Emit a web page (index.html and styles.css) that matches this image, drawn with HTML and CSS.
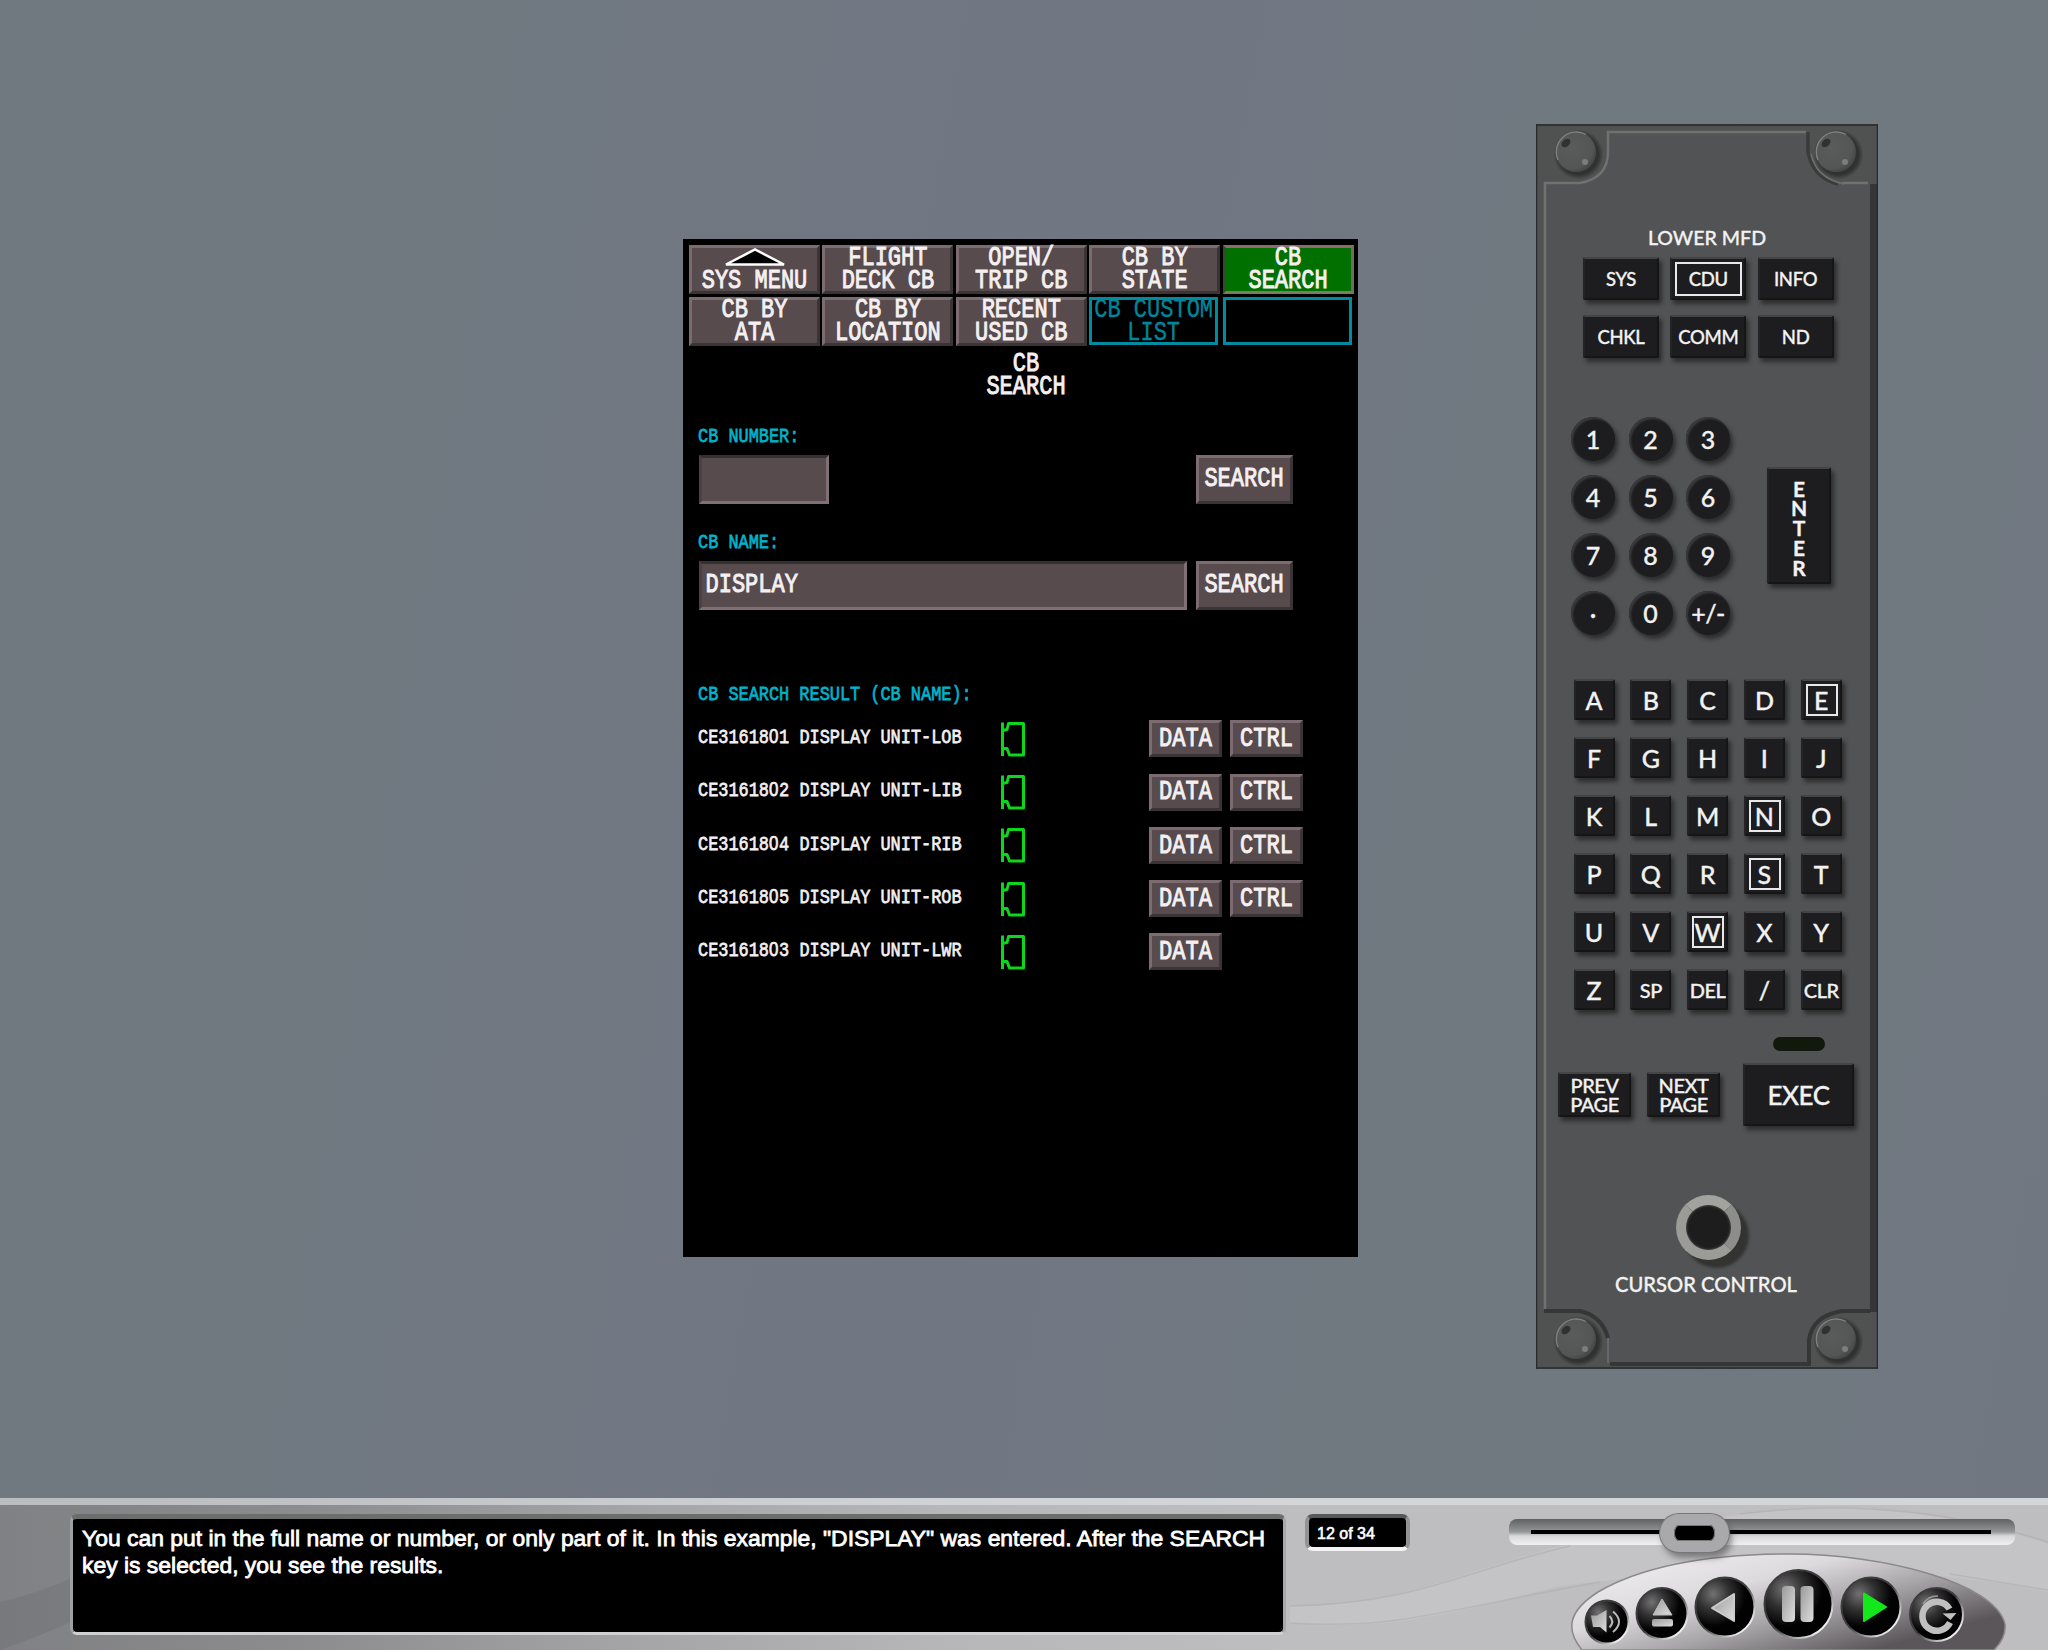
FILE: index.html
```html
<!DOCTYPE html>
<html lang="en">
<head>
<meta charset="utf-8">
<title>CB Search</title>
<link rel="stylesheet" href="styles.css">
</head>
<body>

<svg width="0" height="0" class="defs">
    <defs>
        <symbol id="breaker" viewBox="0 0 26 36">
            <path d="M2.500 1.500V35M2.500 9.500L7 8.500L8.500 2.500H23.500V34H9.500L7 27.500H2.500" fill="none" stroke="#0bd81b" stroke-width="3" stroke-linejoin="round"/>
        </symbol>
        <radialGradient id="screwFace" cx="0.4" cy="0.4" r="0.6">
            <stop offset="0" stop-color="#5a5b5b"/>
            <stop offset="0.85" stop-color="#545555"/>
            <stop offset="1" stop-color="#484949"/>
        </radialGradient>
        <radialGradient id="screwShade" cx="0.5" cy="0.5" r="0.5">
            <stop offset="0.8" stop-color="#303131"/>
            <stop offset="1" stop-color="#303131" stop-opacity="0"/>
        </radialGradient>
        <symbol id="screw" viewBox="0 0 54 54" overflow="visible">
            <circle cx="28.5" cy="28.5" r="25" fill="url(#screwShade)"/>
            <circle cx="26" cy="26" r="20" fill="url(#screwFace)"/>
            <path d="M8 34A20 20 0 0 1 36 8.500" fill="none" stroke="#808181" stroke-width="1.4"/>
            <ellipse cx="16" cy="17" rx="5" ry="3.500" fill="#303131" transform="rotate(-40 16 17)"/>
            <circle cx="35" cy="36" r="3" fill="#7c7d7d"/>
        </symbol>
    </defs>
</svg>

<div id="stage">

    <div id="mfd">
        <div class="tabs">
            <div class="tab">
                <svg class="up" width="66" height="20" viewBox="0 0 66 20"><path d="M4 17.500L33 2.500L62 17.500Z" fill="#000" stroke="#fff" stroke-width="2.500"/></svg>
                <span class="txt"><br>SYS MENU</span>
            </div>
            <div class="tab"><span class="txt">FLIGHT<br>DECK CB</span></div>
            <div class="tab"><span class="txt">OPEN/<br>TRIP CB</span></div>
            <div class="tab"><span class="txt">CB BY<br>STATE</span></div>
            <div class="tab active"><span class="txt">CB<br>SEARCH</span></div>
            <div class="tab"><span class="txt">CB BY<br>ATA</span></div>
            <div class="tab"><span class="txt">CB BY<br>LOCATION</span></div>
            <div class="tab"><span class="txt">RECENT<br>USED CB</span></div>
            <div class="tab off"><span class="txt">CB CUSTOM<br>LIST</span></div>
            <div class="tab off"></div>
        </div>
        <div class="title"><span class="txt">CB<br>SEARCH</span></div>

        <div class="label"><span class="small">CB NUMBER:</span></div>
        <div class="search">
            <div class="field short"></div>
            <div class="btn"><span class="txt">SEARCH</span></div>
        </div>
        <div class="label name"><span class="small">CB NAME:</span></div>
        <div class="search">
            <div class="field"><span class="txt">DISPLAY</span></div>
            <div class="btn"><span class="txt">SEARCH</span></div>
        </div>

        <div class="label result"><span class="small">CB SEARCH RESULT (CB NAME):</span></div>
        <div class="rows">
            <div class="row">
                <span class="small">CE31618<i>0</i>1 DISPLAY UNIT-LOB</span>
                <svg class="cb" width="26" height="36"><use href="#breaker"/></svg>
                <div class="btn"><span class="txt">DATA</span></div>
                <div class="btn"><span class="txt">CTRL</span></div>
            </div>
            <div class="row">
                <span class="small">CE31618<i>0</i>2 DISPLAY UNIT-LIB</span>
                <svg class="cb" width="26" height="36"><use href="#breaker"/></svg>
                <div class="btn"><span class="txt">DATA</span></div>
                <div class="btn"><span class="txt">CTRL</span></div>
            </div>
            <div class="row">
                <span class="small">CE31618<i>0</i>4 DISPLAY UNIT-RIB</span>
                <svg class="cb" width="26" height="36"><use href="#breaker"/></svg>
                <div class="btn"><span class="txt">DATA</span></div>
                <div class="btn"><span class="txt">CTRL</span></div>
            </div>
            <div class="row">
                <span class="small">CE31618<i>0</i>5 DISPLAY UNIT-ROB</span>
                <svg class="cb" width="26" height="36"><use href="#breaker"/></svg>
                <div class="btn"><span class="txt">DATA</span></div>
                <div class="btn"><span class="txt">CTRL</span></div>
            </div>
            <div class="row">
                <span class="small">CE31618<i>0</i>3 DISPLAY UNIT-LWR</span>
                <svg class="cb" width="26" height="36"><use href="#breaker"/></svg>
                <div class="btn"><span class="txt">DATA</span></div>
            </div>
        </div>
    </div>

    <div id="cdu">
        <svg class="plate" width="342" height="1245" viewBox="0 0 342 1245">
            <rect width="342" height="1245" fill="#505151"/>
            <rect x="334" y="60" width="8" height="1128" fill="#353736"/>
            <path d="M7 1188V59H46Q72 52 72 30V7H272V30Q278 54 306 59H334V1186H302Q274 1194 272 1216V1239H72V1214Q66 1190 42 1186H7Z" fill="#525354"/>
            <path d="M9 1186V59H44Q72 54 72 28V8H270" fill="none" stroke="#707171" stroke-width="2.500"/>
            <path d="M306 59H332" fill="none" stroke="#707171" stroke-width="2.500"/>
            <path d="M272 8V28Q277 54 302 60" fill="none" stroke="#3a3b3b" stroke-width="3.500"/>
            <path d="M334 1187H306Q276 1192 273 1216V1240H74" fill="none" stroke="#353636" stroke-width="4"/>
            <path d="M8 1187H44Q66 1192 72 1214" fill="none" stroke="#353636" stroke-width="4"/>
            <path d="M72 1214V1239" fill="none" stroke="#666767" stroke-width="2"/>
            <path d="M308 60Q280 54 275 30" fill="none" stroke="#6d6e6e" stroke-width="1.500"/>
            <use href="#screw" x="14" y="2" width="54" height="54"/>
            <use href="#screw" x="274" y="2" width="54" height="54"/>
            <use href="#screw" x="14" y="1189" width="54" height="54"/>
            <use href="#screw" x="274" y="1189" width="54" height="54"/>
            <path d="M0.500 0V1245M0 1H342M0 1244H342M341.500 0V1245" stroke="#262b2e" stroke-width="1.500"/>
        </svg>

        <div class="heading">LOWER MFD</div>
        <div class="modes">
            <div class="key">SYS</div><div class="key lit">CDU</div><div class="key">INFO</div>
            <div class="key">CHKL</div><div class="key">COMM</div><div class="key">ND</div>
        </div>

        <div class="numeric">
            <div class="digits">
                <div class="dot">1</div><div class="dot">2</div><div class="dot">3</div>
                <div class="dot">4</div><div class="dot">5</div><div class="dot">6</div>
                <div class="dot">7</div><div class="dot">8</div><div class="dot">9</div>
                <div class="dot">·</div><div class="dot">0</div><div class="dot thin">+/-</div>
            </div>
            <div class="key enter">E<br>N<br>T<br>E<br>R</div>
        </div>

        <div class="alpha">
            <div class="key">A</div><div class="key">B</div><div class="key">C</div><div class="key">D</div><div class="key lit">E</div>
            <div class="key">F</div><div class="key">G</div><div class="key">H</div><div class="key">I</div><div class="key">J</div>
            <div class="key">K</div><div class="key">L</div><div class="key">M</div><div class="key lit">N</div><div class="key">O</div>
            <div class="key">P</div><div class="key">Q</div><div class="key">R</div><div class="key lit">S</div><div class="key">T</div>
            <div class="key">U</div><div class="key">V</div><div class="key lit">W</div><div class="key">X</div><div class="key">Y</div>
            <div class="key">Z</div><div class="key word">SP</div><div class="key word">DEL</div><div class="key">/</div><div class="key word">CLR</div>
        </div>

        <div class="led"></div>
        <div class="pages">
            <div class="key page">PREV<br>PAGE</div>
            <div class="key page">NEXT<br>PAGE</div>
            <div class="key exec">EXEC</div>
        </div>
        <div class="knob"></div>
        <div class="heading cursor">CURSOR CONTROL</div>
    </div>
</div>

<div id="player">
    <svg class="waves" width="2048" height="152" viewBox="0 0 2048 152">
        <path d="M0 104Q40 95 76 78V122Q40 138 0 152Z" fill="#000" opacity="0.06"/>
        <path d="M1290 108C1460 108 1500 28 1820 10C1930 10 2000 30 2048 46V94C1960 75 1800 60 1560 88C1460 112 1400 134 1290 125Z" fill="#e2dde2" opacity="0.18"/>
        <path d="M1290 108C1420 106 1470 70 1570 48M1740 16Q1900 -4 2048 44M1290 125C1400 132 1440 112 1600 84M1950 76L2048 92" fill="none" stroke="#a9a8ab" stroke-width="1.500" opacity="0.45"/>
    </svg>
    <div class="caption">You can put in the full name or number, or only part of it. In this example, "DISPLAY" was entered. After the SEARCH<br>key is selected, you see the results.</div>
    <div class="counter">12 of 34</div>
    <div class="controls">
        <div class="slider"><div class="line"></div><div class="thumb"></div></div>
        <svg class="pod" width="440" height="97" viewBox="1568 1553 440 97">
            <defs>
                <linearGradient id="podFill" x1="0.1" y1="0.1" x2="0.9" y2="0.75">
                    <stop offset="0" stop-color="#eeecef"/>
                    <stop offset="0.35" stop-color="#dcdadd"/>
                    <stop offset="0.65" stop-color="#a5a2a6"/>
                    <stop offset="1" stop-color="#5a565a"/>
                </linearGradient>
                <radialGradient id="ball" cx="0.3" cy="0.28" r="0.55">
                    <stop offset="0" stop-color="#727272"/>
                    <stop offset="0.5" stop-color="#303030"/>
                    <stop offset="1" stop-color="#020202"/>
                </radialGradient>
                <linearGradient id="chrome" x1="0" y1="0" x2="1" y2="1">
                    <stop offset="0" stop-color="#9a9a9a"/>
                    <stop offset="1" stop-color="#dedede"/>
                </linearGradient>
                <linearGradient id="rim" x1="0" y1="0" x2="1" y2="1">
                    <stop offset="0.5" stop-color="#3c3c3c"/>
                    <stop offset="0.85" stop-color="#eee"/>
                </linearGradient>
            </defs>
            <path d="M1582 1650C1564 1628 1570 1610 1598 1592C1650 1562 1720 1554 1790 1554C1880 1554 1995 1582 2005 1624C2006 1634 2001 1643 1994 1650Z" fill="url(#podFill)" stroke="#8b888c" stroke-width="1.500"/>
            <g fill="url(#ball)" stroke="url(#rim)" stroke-width="2">
                <circle cx="1607" cy="1622" r="21.500"/>
                <circle cx="1662" cy="1613.500" r="25.500"/>
                <circle cx="1725" cy="1607" r="29.500"/>
                <circle cx="1798.500" cy="1604" r="34"/>
                <circle cx="1871" cy="1607" r="29.500"/>
                <circle cx="1936.500" cy="1614.500" r="26.500"/>
            </g>
            <path d="M1591 1615.500H1597L1606.500 1610V1632.500L1600 1627H1593Z" fill="url(#chrome)"/>
            <path d="M1609.500 1616Q1615 1621.500 1609.500 1627.500M1613 1611.500Q1625 1621.500 1613 1632" fill="none" stroke="#bbb" stroke-width="2"/>
            <path d="M1662 1599L1672 1615H1653Z" fill="url(#chrome)" stroke="#bbb" stroke-linejoin="round"/>
            <rect x="1652" y="1619" width="21" height="7.500" rx="2" fill="url(#chrome)"/>
            <path d="M1712 1608L1734 1594V1621Z" fill="url(#chrome)" stroke="#ccc" stroke-width="2" stroke-linejoin="round"/>
            <rect x="1782" y="1586" width="13" height="36" rx="4" fill="url(#chrome)"/>
            <rect x="1800.500" y="1586" width="13" height="36" rx="4" fill="url(#chrome)"/>
            <path d="M1864 1593.500L1886 1607L1864 1621Z" fill="#12e81c" stroke="#12e81c" stroke-width="2" stroke-linejoin="round"/>
            <path d="M1923 1604A17 17 0 0 1 1938 1596" fill="none" stroke="#999" stroke-width="1.500"/>
            <path d="M1950 1622.500A14.500 14.500 0 1 1 1949.500 1609" fill="none" stroke="#c0c0c0" stroke-width="6.500"/>
            <path d="M1942.500 1613.500L1956.500 1613L1950.500 1620Z" fill="#c0c0c0"/>
        </svg>
    </div>
</div>

</body>
</html>
```
FILE: styles.css
```css
* {
    box-sizing: border-box;
}
body {
    margin: 0;
    width: 2048px;
    height: 1650px;
    overflow: hidden;
    background: #707882;
    font-family: "Liberation Sans", Arial, sans-serif;
}
.defs {
    position: absolute;
}
#stage {
    display: flex;
    align-items: flex-start;
    height: 1498px;
    padding-left: 683px;
    background: linear-gradient(100deg, #70797f 0%, #707783 50%, #70797f 80%, #707781 100%);
}

/* display unit */
#mfd {
    width: 675px;
    height: 1018px;
    margin-top: 239px;
    padding: 6px 4px 0 6px;
    background: #000;
    color: #f4f0f2;
    font-family: "Liberation Mono", monospace;
}
.txt,
.small {
    display: block;
    white-space: pre;
    font-size: 22px;
    line-height: 17.5px;
    transform: scaleY(1.29);
    -webkit-text-stroke: 0.8px;
}
.small {
    font-size: 16.9px;
    transform: scaleY(1.25);
    -webkit-text-stroke: 0.6px;
}
.small i {
    font-family: "Liberation Sans", Arial, sans-serif;
    font-style: normal;
    letter-spacing: 0.75px;
}
.tabs {
    display: grid;
    grid-template-columns: repeat(5, 131px);
    grid-auto-rows: 49px;
    gap: 3px 2.4px;
    text-align: center;
}
.tab,
.btn {
    display: flex;
    align-items: center;
    justify-content: center;
    background: #584b4e;
    border: 3px solid;
    border-color: #7c6c71 #3b3436 #3b3436 #7c6c71;
}
.tab {
    position: relative;
}
.tab .up {
    position: absolute;
    left: 30px;
    top: -1px;
}
.tab.active {
    background: #007000;
    border-color: #8d6a6c #716c5c #7c7c62 #344a30;
}
.tab.off {
    width: 129px;
    height: 48px;
    background: #000;
    color: #00869b;
    border: 3px solid #008ba0;
}
.tab.off .txt {
    -webkit-text-stroke: 0.3px;
}
.title {
    padding-top: 12px;
    margin-right: 1px;
    text-align: center;
}
.title .txt {
    line-height: 17.8px;
    padding-left: 10px;
}
.label {
    margin: 34px 0 0 9px;
    height: 18px;
    color: #00b4cc;
}
.label.name {
    margin-top: 30px;
}
.label.result {
    margin-top: 76px;
}
.search {
    display: flex;
    width: 594px;
    margin: 9px 0 0 9.5px;
    justify-content: space-between;
}
.field {
    display: flex;
    align-items: center;
    width: 488px;
    height: 49px;
    padding-left: 4px;
    background: #584b4e;
    border: 3px solid;
    border-color: #352f31 #806f74 #806f74 #4b4043;
}
.field.short {
    width: 130px;
}
.search .btn {
    width: 97px;
    height: 49px;
}
.rows {
    margin: 17px 0 0 9px;
}
.row {
    display: flex;
    align-items: center;
    height: 36.4px;
    margin-bottom: 16.9px;
}
.row .small {
    width: 302px;
    margin-top: -3px;
}
.row .cb {
    margin-right: 123px;
}
.row .btn {
    width: 73px;
    height: 37px;
    margin-right: 8px;
}

/* keyboard unit */
#cdu {
    position: relative;
    width: 342px;
    height: 1245px;
    margin: 124px 0 0 178px;
    padding-top: 102px;
    color: #f2f2f2;
    font-family: Lato, sans-serif;
    font-weight: 500;
}
.plate {
    position: absolute;
    left: 0;
    top: 0;
}
#cdu > div {
    position: relative;
}
.heading {
    height: 24px;
    line-height: 24px;
    font-size: 19.6px;
    text-align: center;
    -webkit-text-stroke: 0.3px;
}
.key {
    display: flex;
    align-items: center;
    justify-content: center;
    background: #1d1d1f;
    border: 2px solid;
    border-color: #454547 #151516 #151516 #242426;
    border-radius: 2px;
    box-shadow: 3px 4px 4px rgba(20, 20, 20, 0.6);
    font-size: 23px;
    -webkit-text-stroke: 0.3px;
}
.lit {
    position: relative;
}
.lit::after {
    content: "";
    position: absolute;
    left: 3px;
    top: 3px;
    right: 2px;
    bottom: 2px;
    border: 2px solid #e8e8e8;
}
.modes {
    display: grid;
    grid-template-columns: repeat(3, 76px);
    gap: 15px 11.3px;
    padding: 7px 0 0 47px;
}
.modes .key {
    height: 43px;
    padding-top: 1px;
    font-size: 18.5px;
    letter-spacing: -0.3px;
}
.numeric {
    display: flex;
    padding: 59px 0 0 35px;
}
.digits {
    display: grid;
    grid-template-columns: repeat(3, 44px);
    gap: 14px 13.5px;
}
.dot {
    display: flex;
    align-items: center;
    justify-content: center;
    height: 44px;
    border-radius: 50%;
    background: #1d1d1f;
    box-shadow: inset 2px 2px 2px #3b3b3d, 3px 4px 4px rgba(20, 20, 20, 0.6);
    font-size: 25px;
    -webkit-text-stroke: 0.3px;
}
.dot.thin {
    letter-spacing: -0.5px;
}
.enter {
    width: 64px;
    height: 117px;
    margin: 50px 0 0 37px;
    padding-top: 5px;
    font-size: 21px;
    font-weight: bold;
    line-height: 19.7px;
    text-align: center;
}
.alpha {
    display: grid;
    grid-template-columns: repeat(5, 41px);
    gap: 17px 15.8px;
    padding: 44px 0 0 37.5px;
}
.alpha .key {
    height: 41px;
    font-size: 25px;
}
.alpha .word {
    font-size: 20px;
    letter-spacing: -0.5px;
}
.led {
    width: 52px;
    height: 14px;
    margin: 27px 0 0 237px;
    border-radius: 7px;
    background: #10190c;
}
.pages {
    display: flex;
    align-items: center;
    height: 63px;
    margin: 12px 0 0 22px;
}
.page {
    width: 73px;
    height: 45px;
    margin-right: 16px;
    font-size: 20px;
    line-height: 19px;
    text-align: center;
    letter-spacing: -0.5px;
}
.exec {
    width: 111px;
    height: 63px;
    margin-left: 7px;
    font-size: 26px;
    letter-spacing: -0.5px;
}
.knob {
    width: 65px;
    height: 65px;
    margin: 69px 0 0 140px;
    border: 10px solid #9b9c98;
    border-top-color: #a2a29e;
    border-right-color: #8d8e8b;
    border-radius: 50%;
    background: #1d1d1d;
    box-shadow: 8px 8px 3px #333432, inset 0 0 3px #666;
}
.heading.cursor {
    margin: 12px 0 0 -2px;
    font-size: 20.2px;
}

/* bottom bar */
#player {
    position: relative;
    display: flex;
    align-items: flex-start;
    height: 152px;
    padding: 16px 0 0 70px;
    border-top: 7px solid rgba(225, 230, 232, 0.6);
    background: linear-gradient(90deg, #808184 0, #8c8b8e 300px, #a4a3a5 620px, #b7b6b9 950px, #bebdc0 1300px, #bebdc0 100%) border-box;
    color: #fff;
}
#player > div {
    position: relative;
}
.waves {
    position: absolute;
    left: 0;
    top: -7px;
}
.caption {
    width: 1216px;
    height: 121px;
    margin-top: -7px;
    padding: 6px 0 0 9px;
    background: #000;
    border: 3px solid;
    border-color: #6c6e6e #a8a8aa #d0d0d2 #a0a0a2;
    border-top-width: 5px;
    border-radius: 7px;
    font-size: 22.9px;
    line-height: 26.5px;
    white-space: nowrap;
    -webkit-text-stroke: 0.8px;
}
.counter {
    width: 105px;
    height: 37px;
    margin: -7px 0 0 19px;
    padding: 6px 0 0 8px;
    background: #000;
    border: 4px solid;
    border-color: #57585a #929294 #f4f4f4 #929294;
    border-radius: 8px;
    font-size: 16px;
    line-height: 19px;
    -webkit-text-stroke: 0.6px;
}
.controls {
    width: 506px;
    margin-left: 99px;
}
.slider {
    position: relative;
    height: 26px;
    margin-top: -2px;
    padding: 11px 24px 0 22px;
    border-radius: 8px;
    background: linear-gradient(#606163, #97989a 50%, #d8d8da 65%, #f0f0f2);
}
.line {
    height: 4px;
    background: #000;
}
.thumb {
    position: absolute;
    left: 151px;
    top: -5px;
    width: 69px;
    height: 38px;
    border: 11px solid #a9a9ab;
    border-left-width: 14px;
    border-right-width: 14px;
    border-radius: 19px;
    background: #000;
    box-shadow: inset 0 0 0 1px #777, 0 0 0 1px #777, 3px 6px 6px rgba(50, 50, 50, 0.5);
}
.pod {
    display: block;
    margin: 8px 0 0 59px;
}
```
